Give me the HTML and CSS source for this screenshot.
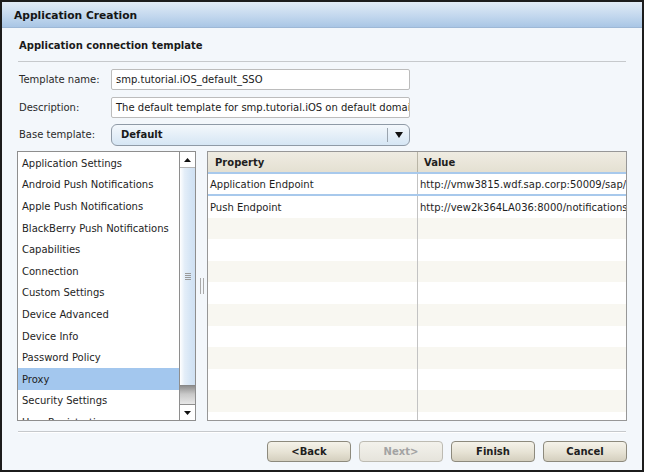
FILE: index.html
```html
<!DOCTYPE html>
<html>
<head>
<meta charset="utf-8">
<link rel="stylesheet" href="styles.css">
</head>
<body>
<div class="frame">
  <div class="titlebar">Application Creation</div>
  <div class="content">
    <div class="heading">Application connection template</div>
    <div class="form">
      <div class="label">Template name:</div>
      <div class="input">smp.tutorial.iOS_default_SSO</div>
      <div class="label">Description:</div>
      <div class="input">The default template for smp.tutorial.iOS on default domain</div>
      <div class="label">Base template:</div>
      <div class="select">
        <span class="sel-text">Default</span>
        <span class="sel-btn"><svg width="8" height="6" viewBox="0 0 8 6"><path d="M0 0H8L4 6Z" fill="#111"/></svg></span>
      </div>
    </div>
    <div class="main">
      <div class="list">
        <div class="items">
          <div class="item">Application Settings</div>
          <div class="item">Android Push Notifications</div>
          <div class="item">Apple Push Notifications</div>
          <div class="item">BlackBerry Push Notifications</div>
          <div class="item">Capabilities</div>
          <div class="item">Connection</div>
          <div class="item">Custom Settings</div>
          <div class="item">Device Advanced</div>
          <div class="item">Device Info</div>
          <div class="item">Password Policy</div>
          <div class="item selected">Proxy</div>
          <div class="item">Security Settings</div>
          <div class="item">User Registration</div>
        </div>
        <div class="vscroll">
          <div class="sb-btn"><svg width="7" height="4" viewBox="0 0 7 4"><path d="M0 4H7L3.5 0Z" fill="#111"/></svg></div>
          <div class="sb-thumb"><span class="sb-grip"></span></div>
          <div class="sb-track"></div>
          <div class="sb-btn sb-down"><svg width="7" height="4" viewBox="0 0 7 4"><path d="M0 0H7L3.5 4Z" fill="#111"/></svg></div>
        </div>
      </div>
      <div class="splitter"><span class="grip"></span></div>
      <div class="table">
        <div class="row head"><div class="cell c1">Property</div><div class="cell c2">Value</div></div>
        <div class="row sel"><div class="cell c1">Application Endpoint</div><div class="cell c2">http://vmw3815.wdf.sap.corp:50009/sap/bc/odata</div></div>
        <div class="row"><div class="cell c1">Push Endpoint</div><div class="cell c2">http://vew2k364LA036:8000/notifications</div></div>
        <div class="row"><div class="cell c1"></div><div class="cell c2"></div></div>
        <div class="row"><div class="cell c1"></div><div class="cell c2"></div></div>
        <div class="row"><div class="cell c1"></div><div class="cell c2"></div></div>
        <div class="row"><div class="cell c1"></div><div class="cell c2"></div></div>
        <div class="row"><div class="cell c1"></div><div class="cell c2"></div></div>
        <div class="row"><div class="cell c1"></div><div class="cell c2"></div></div>
        <div class="row"><div class="cell c1"></div><div class="cell c2"></div></div>
        <div class="row"><div class="cell c1"></div><div class="cell c2"></div></div>
        <div class="row"><div class="cell c1"></div><div class="cell c2"></div></div>
        <div class="row"><div class="cell c1"></div><div class="cell c2"></div></div>
        <div class="row"><div class="cell c1"></div><div class="cell c2"></div></div>
      </div>
    </div>
    <div class="sep"></div>
    <div class="buttons">
      <div class="btn">&lt;Back</div>
      <div class="btn disabled">Next&gt;</div>
      <div class="btn">Finish</div>
      <div class="btn">Cancel</div>
    </div>
  </div>
</div>
</body>
</html>
```

FILE: styles.css
```css
* { box-sizing: border-box; }
html, body { margin: 0; padding: 0; background: #ffffff; }
body {
  font-family: "DejaVu Sans", Verdana, sans-serif;
  font-size: 10px;
  color: #222;
}
.frame {
  width: 644px;
  height: 472px;
  border: 2px solid #1c1c1c;
  background: #f3f7fb;
  display: flex;
  flex-direction: column;
}
.titlebar {
  height: 26px;
  padding-left: 12px;
  padding-top: 1px;
  display: flex;
  align-items: center;
  font-weight: bold;
  font-size: 10.7px;
  color: #151515;
  background: linear-gradient(#e1ebf6, #c3d8ee 55%, #a9c6e5);
  border-bottom: 1px solid #9db8d6;
}
.content {
  flex: 1;
  padding: 0 15px 0 15px;
  display: flex;
  flex-direction: column;
}
.heading {
  height: 34px;
  margin: 0 1px 0 1px;
  padding: 1px 0 0 1px;
  display: flex;
  align-items: center;
  font-weight: bold;
  color: #1a1a1a;
  border-bottom: 1px solid #c6c9cc;
}
.form {
  margin-top: 7px;
  display: grid;
  grid-template-columns: 94px 299px;
  grid-auto-rows: 21px;
  row-gap: 6.5px;
  align-items: center;
}
.label {
  padding-left: 2px;
  color: #2a2a2a;
}
.input {
  height: 21px;
  background: #fff;
  border: 1px solid #bcbcbc;
  border-radius: 2px;
  padding-left: 4px;
  display: flex;
  align-items: center;
  white-space: nowrap;
  overflow: hidden;
  color: #1a1a1a;
}
.select {
  height: 22px;
  border: 1px solid #8f9aa6;
  border-radius: 6px;
  background: linear-gradient(#f4f8fc, #e2edf7 60%, #d6e6f4);
  display: flex;
  align-items: center;
}
.sel-text {
  flex: 1;
  padding-left: 9px;
  font-weight: bold;
  color: #1a1a1a;
}
.sel-btn {
  width: 22px;
  height: 14px;
  border-left: 1px solid #9aa4ae;
  display: flex;
  align-items: center;
  justify-content: center;
}
.main {
  margin-top: 6px;
  height: 270px;
  display: grid;
  grid-template-columns: 179px 11px 420px;
}
.list {
  border: 1px solid #8e8e8e;
  background: #fff;
  display: flex;
  overflow: hidden;
}
.items {
  flex: 1;
  overflow: hidden;
}
.item {
  height: 21.6px;
  padding-left: 4px;
  padding-top: 1px;
  display: flex;
  align-items: center;
  white-space: nowrap;
  color: #1e1e1e;
}
.item.selected { background: #a3c7ee; }
.vscroll {
  width: 16px;
  border-left: 1px solid #8e8e8e;
  display: flex;
  flex-direction: column;
  background: #fff;
}
.sb-btn {
  height: 16px;
  display: flex;
  align-items: center;
  justify-content: center;
  background: #fff;
  border-bottom: 1px solid #b5b5b5;
}
.sb-down {
  border-bottom: none;
  border-top: 1px solid #8e8e8e;
}
.sb-thumb {
  height: 218px;
  border-bottom: 1px solid #888;
  background: linear-gradient(90deg, #ffffff, #e4eef8 30%, #d5e5f5 70%, #cfe0f2);
  display: flex;
  align-items: center;
  justify-content: center;
}
.sb-grip {
  width: 6px;
  height: 7px;
  background: repeating-linear-gradient(#9a9a9a 0 1px, transparent 1px 2px);
}
.sb-track {
  flex: 1;
  background: linear-gradient(#8f8f8f, #c8c8c8 45%, #e8e8e8);
}
.splitter {
  display: flex;
  align-items: center;
  justify-content: center;
}
.grip {
  width: 4px;
  height: 16px;
  border-left: 1px solid #a9a9a9;
  border-right: 1px solid #a9a9a9;
}
.table {
  border: 1px solid #979797;
  background: #fff;
  overflow: hidden;
}
.row {
  height: 21.6px;
  display: grid;
  grid-template-columns: 210px 1fr;
}
.row:nth-child(2n) { background: #f8f7f1; }
.row.sel, .row:nth-child(3) { background: #fff; }
.cell {
  display: flex;
  align-items: center;
  padding-left: 2px;
  padding-top: 1px;
  white-space: nowrap;
  overflow: hidden;
  color: #1e1e1e;
}
.c1 { border-right: 1px solid #c3c3c3; }
.row.head {
  height: 22px;
  background: linear-gradient(#efece2, #e4e0d2);
  border-bottom: 2px solid #a8c9ec;
  font-weight: bold;
}
.row.head .c1 { padding-left: 7px; border-right-color: #b9b5a6; }
.row.head .c2 { padding-left: 6px; }
.row.sel { border-bottom: 2px solid #a8c9ec; height: 22px; }
.sep {
  margin: 10px 1px 0 1px;
  height: 2px;
  border-top: 1px solid #c6c9cc;
  border-bottom: 1px solid #ffffff;
}
.buttons {
  margin-top: 8px;
  display: flex;
  justify-content: flex-end;
  gap: 8px;
}
.btn {
  width: 84px;
  height: 21px;
  border: 1px solid #8d8a7d;
  border-radius: 4px;
  background: linear-gradient(#f5f3ea, #e6e2d4 55%, #d4cfbe);
  display: flex;
  align-items: center;
  justify-content: center;
  font-weight: bold;
  color: #1e1e1e;
}
.btn.disabled {
  color: #a3a3a3;
  border-color: #bdbbb2;
  background: linear-gradient(#f3f2ec, #e6e4dc);
}
```
